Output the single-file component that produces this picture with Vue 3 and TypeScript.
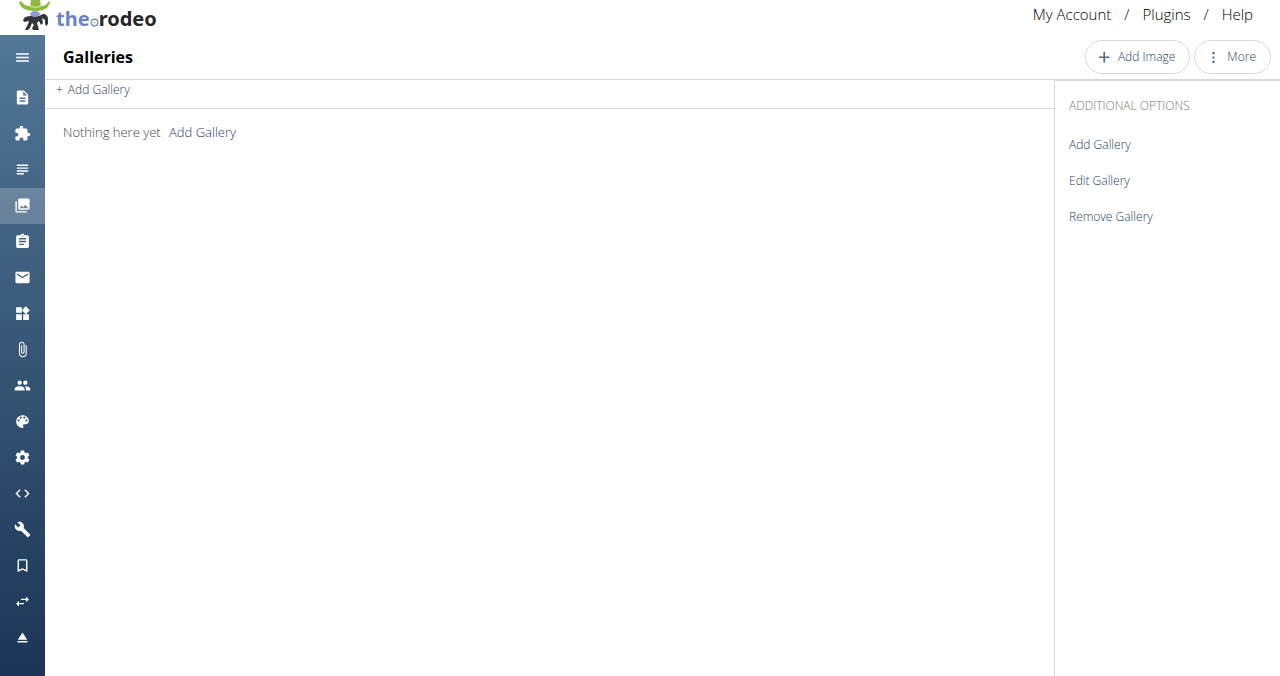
<script setup lang="ts">
interface NavItem {
  label: string
  path: string
  active?: boolean
}

const navItems: NavItem[] = [
  { label: 'Pages', path: 'M14 2H6c-1.100 0-2 .9-2 2v16c0 1.100.9 2 2 2h12c1.100 0 2-.9 2-2V8l-6-6zm2 16H8v-2h8v2zm0-4H8v-2h8v2zm-3-5V3.500L18.500 9H13z' },
  { label: 'Plugins', path: 'M20.500 11H19V7c0-1.100-.9-2-2-2h-4V3.500a2.500 2.500 0 0 0-5 0V5H4c-1.100 0-2 .9-2 2v3.800h1.500a2.700 2.700 0 0 1 0 5.400H2V20c0 1.100.9 2 2 2h3.800v-1.500a2.700 2.700 0 0 1 5.400 0V22H17c1.100 0 2-.9 2-2v-4h1.500a2.500 2.500 0 0 0 0-5z' },
  { label: 'Blog', path: 'M14 17H4v2h10v-2zm6-8H4v2h16V9zM4 15h16v-2H4v2zM4 5v2h16V5H4z' },
  { label: 'Galleries', active: true, path: 'M22 16V4c0-1.100-.9-2-2-2H8c-1.100 0-2 .9-2 2v12c0 1.100.9 2 2 2h12c1.100 0 2-.9 2-2zm-11-4 2.030 2.710L16 11l4 5H8l3-4zM2 6v14c0 1.100.9 2 2 2h14v-2H4V6H2z' },
  { label: 'Forms', path: 'M19 3h-4.180C14.400 1.840 13.300 1 12 1s-2.400.84-2.820 2H5c-1.100 0-2 .9-2 2v14c0 1.100.9 2 2 2h14c1.100 0 2-.9 2-2V5c0-1.100-.9-2-2-2zm-7 0c.55 0 1 .45 1 1s-.45 1-1 1-1-.45-1-1 .45-1 1-1zm2 14H7v-2h7v2zm3-4H7v-2h10v2zm0-4H7V7h10v2z' },
  { label: 'Email', path: 'M20 4H4c-1.100 0-2 .9-2 2v12c0 1.100.9 2 2 2h16c1.100 0 2-.9 2-2V6c0-1.100-.9-2-2-2zm0 4-8 5-8-5V6l8 5 8-5v2z' },
  { label: 'Widgets', path: 'M13 13v8h8v-8h-8zM3 21h8v-8H3v8zM3 3v8h8V3H3zm13.660-1.310L11 7.340 16.660 13l5.660-5.660-5.660-5.650z' },
  { label: 'Files', path: 'M16.500 6v11.500c0 2.210-1.790 4-4 4s-4-1.790-4-4V5a2.500 2.500 0 0 1 5 0v10.500c0 .55-.45 1-1 1s-1-.45-1-1V6H10v9.500a2.500 2.500 0 0 0 5 0V5c0-2.210-1.790-4-4-4S7 2.790 7 5v12.500c0 3.040 2.460 5.500 5.500 5.500s5.500-2.460 5.500-5.500V6h-1.500z' },
  { label: 'Users', path: 'M16 11c1.660 0 2.990-1.340 2.990-3S17.660 5 16 5s-3 1.340-3 3 1.340 3 3 3zm-8 0c1.660 0 2.990-1.340 2.990-3S9.660 5 8 5 5 6.340 5 8s1.340 3 3 3zm0 2c-2.330 0-7 1.170-7 3.500V19h14v-2.500c0-2.330-4.670-3.500-7-3.500zm8 0c-.29 0-.62.02-.97.05 1.160.84 1.970 1.970 1.970 3.450V19h6v-2.500c0-2.330-4.670-3.500-7-3.500z' },
  { label: 'Design', path: 'M12 3a9 9 0 0 0 0 18c.83 0 1.500-.67 1.500-1.500 0-.39-.15-.74-.39-1.010-.23-.26-.38-.61-.38-.99 0-.83.67-1.500 1.500-1.500H16c2.760 0 5-2.240 5-5 0-4.420-4.030-8-9-8zm-5.500 9a1.500 1.500 0 0 1 0-3 1.500 1.500 0 0 1 0 3zm3-4a1.500 1.500 0 0 1 0-3 1.500 1.500 0 0 1 0 3zm5 0a1.500 1.500 0 0 1 0-3 1.500 1.500 0 0 1 0 3zm3 4a1.500 1.500 0 0 1 0-3 1.500 1.500 0 0 1 0 3z' },
  { label: 'Settings', path: 'M19.430 12.980c.04-.32.07-.64.07-.98s-.03-.66-.07-.98l2.110-1.650c.19-.15.24-.42.12-.64l-2-3.460c-.12-.22-.39-.3-.61-.22l-2.490 1c-.52-.4-1.080-.73-1.690-.98l-.38-2.650C14.460 2.180 14.250 2 14 2h-4c-.25 0-.46.18-.49.42l-.38 2.650c-.61.25-1.170.59-1.690.98l-2.490-1c-.23-.09-.49 0-.61.22l-2 3.460c-.13.22-.07.49.12.64l2.110 1.650c-.04.32-.07.65-.07.98s.03.66.07.98l-2.110 1.650c-.19.15-.24.42-.12.64l2 3.460c.12.22.39.3.61.22l2.490-1c.52.4 1.080.73 1.690.98l.38 2.650c.03.24.24.42.49.42h4c.25 0 .46-.18.49-.42l.38-2.650c.61-.25 1.170-.59 1.690-.98l2.490 1c.23.09.49 0 .61-.22l2-3.460c.12-.22.07-.49-.12-.64l-2.110-1.650zM12 15.500a3.500 3.500 0 1 1 0-7 3.500 3.500 0 0 1 0 7z' },
  { label: 'Code', path: 'M9.400 16.600 4.800 12l4.600-4.600L8 6l-6 6 6 6 1.400-1.400zm5.200 0 4.600-4.600-4.600-4.600L16 6l6 6-6 6-1.400-1.400z' },
  { label: 'Tools', path: 'M22.700 19l-9.100-9.100c.9-2.300.4-5-1.500-6.900-2-2-5-2.400-7.400-1.300L9 6 6 9 1.600 4.700C.4 7.100.9 10.100 2.900 12.100c1.900 1.900 4.600 2.400 6.900 1.500l9.100 9.100c.4.4 1 .4 1.400 0l2.300-2.300c.5-.4.5-1.100.1-1.400z' },
  { label: 'Bookmarks', path: 'M17 3H7c-1.100 0-1.990.9-1.990 2L5 21l7-3 7 3V5c0-1.100-.9-2-2-2zm0 15-5-2.180L7 18V5h10v13z' },
  { label: 'Redirects', path: 'M6.990 11 3 15l3.990 4v-3H14v-2H6.990v-3zM21 9l-3.990-4v3H10v2h7.010v3L21 9z' },
  { label: 'Sign out', path: 'M5 17h14v2H5zm7-12L5.330 15h13.340z' },
]

const accountLinks: string[] = ['My Account', 'Plugins', 'Help']
const options: string[] = ['Add Gallery', 'Edit Gallery', 'Remove Gallery']
</script>

<template>
  <div class="app">
    <header class="top">
      <a class="logo" href="#" aria-label="the rodeo">
        <svg class="mascot" viewBox="0 0 32 32" aria-hidden="true">
          <path fill="#33353b" d="M5 18c3-2 6-2 9-2h6l4-2c3 0 5 2 5 5v5l-2 2-1-2v-4l-3-2 1 5-2 2-2-4-2 2 2 7h-6l-1-2 2-3-2-2-2 5-2 2H6l1-2 3-6-1-1-3 1-2-1z" />
          <ellipse cx="16" cy="14" rx="5" ry="3" fill="#8b9bd6" />
          <path fill="#8ebb3c" d="M0 2l2-1c2 3 5 5 9 5l1-6h9l1 6c4 0 6-2 8-5l1 1c-1 6-6 9-15 9S1 8 0 2z" />
          <path fill="#d5e2ac" d="M11 5c4 2 7 2 11 0v2c-4 1-7 1-11 0z" />
        </svg>
        <span class="wordmark">
          <span class="the">the</span>
          <svg class="badge" viewBox="0 0 8 8" aria-hidden="true">
            <circle cx="4" cy="4" r="3" fill="#fff" stroke="#6680bd" />
            <path d="M4 3l1 1-1 1-1-1z" fill="#9aae63" />
          </svg>
          <span class="rodeo">rodeo</span>
        </span>
      </a>
      <nav class="account" aria-label="Account">
        <template v-for="(link, i) in accountLinks" :key="link">
          <span v-if="i > 0">/</span>
          <a href="#">{{ link }}</a>
        </template>
      </nav>
    </header>

    <div class="body">
      <nav class="sidebar" aria-label="Main">
        <button class="menu" type="button" aria-label="Menu">
          <svg class="icon" viewBox="0 0 24 24"><path d="M3 18h18v-2H3v2zm0-5h18v-2H3v2zm0-7v2h18V6H3z" /></svg>
        </button>
        <a
          v-for="item in navItems"
          :key="item.label"
          class="nav-item"
          :class="{ active: item.active }"
          href="#"
          :aria-label="item.label"
        >
          <svg class="icon" viewBox="0 0 24 24"><path :d="item.path" /></svg>
        </a>
      </nav>

      <div class="workspace">
        <div class="toolbar">
          <h1>Galleries</h1>
          <div class="actions">
            <button class="pill" type="button">
              <svg class="pill-icon" viewBox="0 0 24 24" aria-hidden="true"><path d="M21 13h-8v8h-3v-8H2v-3h8V2h3v8h8z" /></svg>
              Add Image
            </button>
            <button class="pill" type="button">
              <svg class="pill-icon" viewBox="0 0 24 24" aria-hidden="true"><path d="M10 2h4v4h-4zM10 10h4v4h-4zM10 18h4v4h-4z" /></svg>
              More
            </button>
          </div>
        </div>
        <div class="content">
          <main class="main">
            <div class="subbar"><a class="add" href="#"><span>+</span><span>Add Gallery</span></a></div>
            <p class="empty">Nothing here yet <a href="#">Add Gallery</a></p>
          </main>
          <aside class="options">
            <h2>ADDITIONAL OPTIONS</h2>
            <ul>
              <li v-for="option in options" :key="option"><a href="#">{{ option }}</a></li>
            </ul>
          </aside>
        </div>
      </div>
    </div>
  </div>
</template>

<style>
body {
  margin: 0;
  background: #fff;
}
</style>

<style scoped>
.app {
  display: flex;
  flex-direction: column;
  min-height: 100vh;
  font-family: 'Open Sans', 'Noto Sans', sans-serif;
  font-size: 12px;
  font-weight: 300;
  color: #444;
}
a {
  color: #1f4064;
  text-decoration: none;
}
.top {
  display: flex;
  justify-content: space-between;
  height: 35px;
  padding: 0 27px 0 19px;
}
.logo {
  display: flex;
  gap: 5px;
}
.mascot {
  width: 32px;
  height: 32px;
}
.wordmark {
  display: flex;
  align-items: center;
  height: 37px;
  font-family: 'Noto Sans', sans-serif;
  font-size: 20px;
  font-weight: 700;
}
.the {
  color: #6a83c3;
}
.badge {
  width: 9px;
  height: 9px;
  margin-top: 8px;
}
.rodeo {
  color: #25262b;
}
.account {
  display: flex;
  gap: 13px;
  font-size: 15px;
  line-height: 28px;
  color: #000;
}
.account a {
  color: #000;
}
.body {
  display: flex;
  flex: 1;
}
.sidebar {
  display: flex;
  flex-direction: column;
  width: 45px;
  background: linear-gradient(#537796, #1b3556);
}
.menu,
.nav-item {
  display: flex;
  box-sizing: border-box;
  align-items: center;
  justify-content: center;
  height: 36px;
  padding: 0 0 1px;
}
.menu {
  height: 45px;
  border: 0;
  background: none;
}
.active {
  background: rgba(255, 255, 255, 0.2);
}
.icon {
  width: 17px;
  height: 17px;
  fill: #fff;
}
.workspace {
  display: flex;
  flex: 1;
  flex-direction: column;
}
.toolbar {
  display: flex;
  align-items: center;
  justify-content: space-between;
  height: 44px;
  padding: 0 9px 0 18px;
  border-bottom: 1px solid #d9d9d9;
}
h1 {
  margin: 0;
  font-size: 16px;
  font-weight: 700;
  color: #000;
}
.actions {
  display: flex;
  gap: 4px;
}
.pill {
  display: flex;
  align-items: center;
  gap: 7px;
  height: 34px;
  padding: 0 14px 0 12px;
  border: 1px solid #d9d9d9;
  border-radius: 17px;
  background: #fff;
  font-family: inherit;
  font-size: 12px;
  font-weight: 300;
  line-height: 16px;
  color: #1f4064;
}
.pill-icon {
  width: 13px;
  height: 13px;
  fill: #526b85;
}
.content {
  display: flex;
  flex: 1;
}
.main {
  flex: 1;
}
.subbar {
  height: 28px;
  padding-left: 11px;
  border-bottom: 1px solid #d9d9d9;
  line-height: 20px;
}
.add {
  display: inline-flex;
  gap: 5px;
}
.empty {
  margin: 0;
  padding: 13px 18px;
  font-size: 13px;
  line-height: 20px;
}
.empty a {
  margin-left: 5px;
}
.options {
  width: 211px;
  padding-left: 14px;
  border-top: 1px solid #d9d9d9;
  border-left: 1px solid #d9d9d9;
}
h2 {
  margin: 15px 0 11px;
  font-size: 12px;
  font-weight: 300;
  line-height: 20px;
  color: #777;
}
ul {
  margin: 0;
  padding: 0;
  list-style: none;
}
li {
  line-height: 36px;
}
</style>
